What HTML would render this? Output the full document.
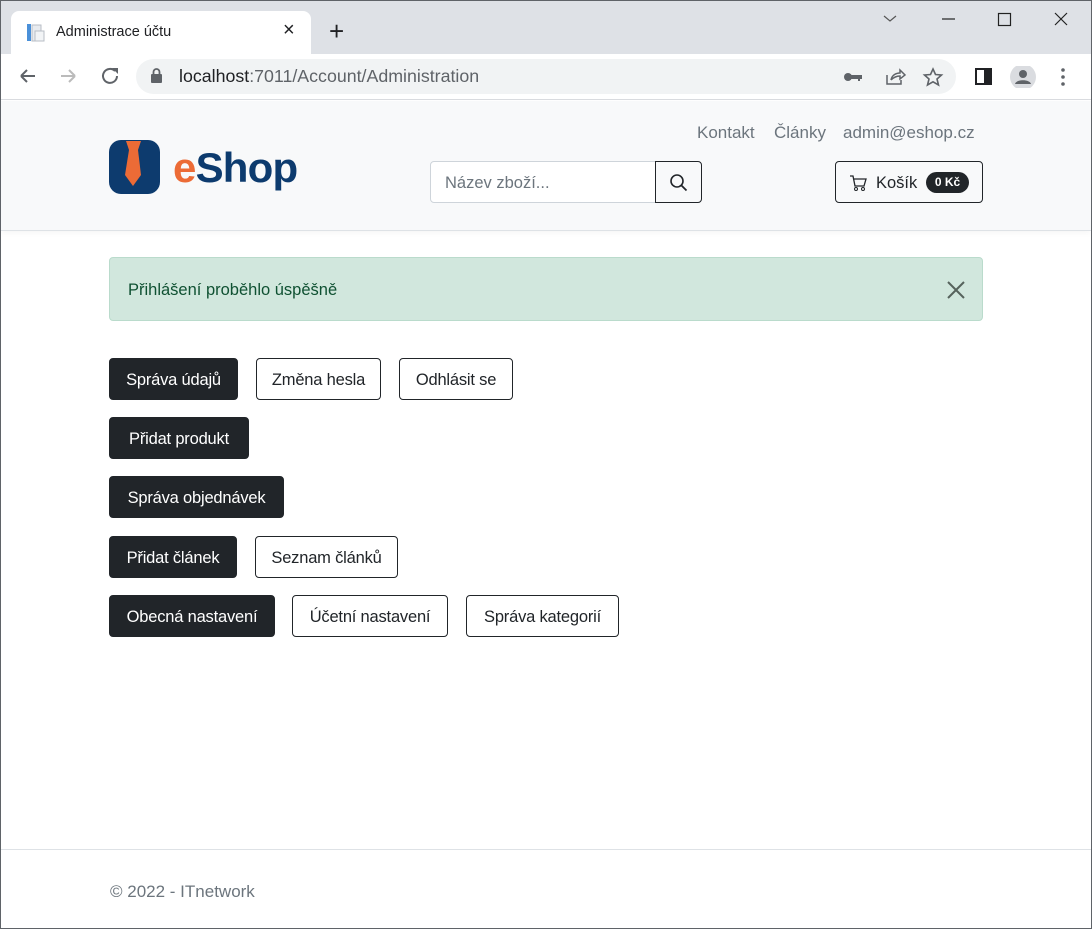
<!DOCTYPE html>
<html><head><meta charset="utf-8"><style>
*{box-sizing:border-box;margin:0;padding:0}
body{width:1092px;height:929px;position:relative;overflow:hidden;font-family:"Liberation Sans",sans-serif;background:#fff}
.a{position:absolute}
.frame{left:0;top:0;width:1092px;height:929px;border:1px solid #5f6368;z-index:9;pointer-events:none}
.btn{position:absolute;height:42px;border:1px solid #212529;border-radius:4px;font-size:16.5px;line-height:43px;text-align:center;white-space:nowrap;color:#212529;background:#fff;letter-spacing:-0.2px}
.dk{background:#212529;color:#fff}
.nav{font-size:17px;color:#6c757d;top:123px}
</style></head><body>
<div class="a frame"></div>
<!-- tab bar -->
<div class="a" style="left:0;top:0;width:1092px;height:54px;background:#dee1e6"></div>
<div class="a" style="left:11px;top:11px;width:300px;height:44px;background:#fff;border-radius:8px 8px 0 0"></div>
<svg class="a" style="left:26px;top:23px" width="20" height="20"><rect x="1" y="1" width="4" height="17" fill="#4a90d9"/><rect x="6" y="2" width="9" height="16" fill="#e8ebef" stroke="#b8bec6"/><rect x="9" y="8" width="9" height="10" fill="#f2f4f6" stroke="#b8bec6"/></svg>
<div class="a" style="left:56px;top:24px;font-size:14.5px;color:#202124">Administrace účtu</div>
<div class="a" style="left:283px;top:19px;font-size:20px;color:#202124">×</div>
<div class="a" style="left:329px;top:16px;font-size:26px;color:#202124;font-weight:300">+</div>
<svg class="a" style="left:880px;top:12px" width="200" height="18"><path d="M4 4l6 5 6-5" stroke="#555" fill="none" stroke-width="1.2"/><path d="M62 7h13" stroke="#222" stroke-width="1.2"/><rect x="118.5" y="1.5" width="12" height="12" fill="none" stroke="#222" stroke-width="1.2"/><path d="M175 1l12 12M187 1l-12 12" stroke="#222" stroke-width="1.2"/></svg>
<!-- toolbar -->
<div class="a" style="left:0;top:54px;width:1092px;height:46px;background:#fff;border-bottom:1px solid #dadce0"></div>
<svg class="a" style="left:18px;top:66px" width="110" height="20"><path d="M3 10h14M3 10l6-6M3 10l6 6" stroke="#5f6368" stroke-width="2" fill="none"/><path d="M43 10h14M57 10l-6-6M57 10l-6 6" stroke="#bbb" stroke-width="2" fill="none"/><path d="M97 5a7 7 0 1 0 2 5" stroke="#5f6368" stroke-width="2" fill="none"/><path d="M94 2h6v6z" fill="#5f6368"/></svg>
<div class="a" style="left:136px;top:59px;width:820px;height:35px;background:#f1f3f4;border-radius:18px"></div>
<svg class="a" style="left:150px;top:68px" width="14" height="16"><rect x="1" y="6" width="11" height="9" rx="1" fill="#5f6368"/><path d="M3.5 6V4a3 3 0 0 1 6 0v2" stroke="#5f6368" stroke-width="1.8" fill="none"/></svg>
<div class="a" style="left:179px;top:66px;font-size:17.8px;color:#202124">localhost<span style="color:#5f6368">:7011/Account/Administration</span></div>
<svg class="a" style="left:843px;top:66px" width="230" height="22"><circle cx="5" cy="11" r="4" fill="#5f6368"/><path d="M8 9h11v4h-2v2h-2v-2h-7z" fill="#5f6368"/><path d="M44 9v9h14v-4M48 14c1-5 5-7 9-7v-3l5 5-5 4v-3c-4 0-7 2-9 4" stroke="#5f6368" stroke-width="1.5" fill="none"/><path d="M90 3l2.5 5.5 6 .5-4.5 4 1.5 6-5.5-3.2-5.5 3.2 1.5-6-4.5-4 6-.5z" stroke="#5f6368" stroke-width="1.6" fill="none"/><rect x="133" y="3" width="15" height="15" fill="none" stroke="#202124" stroke-width="2"/><rect x="141" y="3" width="7" height="15" fill="#202124"/><circle cx="180" cy="11" r="13" fill="#dadce0"/><circle cx="180" cy="8" r="4" fill="#5f6368"/><path d="M172 18c1-5 15-5 16 0z" fill="#5f6368"/><circle cx="220" cy="4" r="1.8" fill="#5f6368"/><circle cx="220" cy="11" r="1.8" fill="#5f6368"/><circle cx="220" cy="18" r="1.8" fill="#5f6368"/></svg>
<!-- header -->
<div class="a" style="left:1px;top:101px;width:1090px;height:130px;background:#f8f9fa;border-bottom:1px solid #dee2e6;box-shadow:0 2px 6px rgba(0,0,0,.04)"></div>
<svg class="a" style="left:109px;top:140px" width="52" height="54"><rect x="0" y="0" width="51" height="54" rx="12" fill="#0d3b6e"/><path d="M17 1h15l-3 9h-9z" fill="#ec6b36"/><path d="M20 10h9l3 25-8 11-8-11z" fill="#ec6b36"/></svg>
<div class="a" style="left:173px;top:144px;font-size:42px;font-weight:bold;letter-spacing:-0.8px;color:#0d3b6e"><span style="color:#ec6b36">e</span>Shop</div>
<div class="a nav" style="left:697px">Kontakt</div>
<div class="a nav" style="left:774px">Články</div>
<div class="a nav" style="left:843px">admin@eshop.cz</div>
<div class="a" style="left:430px;top:161px;width:226px;height:42px;background:#fff;border:1px solid #ced4da;border-radius:4px 0 0 4px;padding-left:14px;line-height:43px;font-size:16.5px;color:#6c757d">Název zboží...</div>
<div class="a" style="left:655px;top:161px;width:47px;height:42px;border:1px solid #212529;border-radius:0 4px 4px 0"></div>
<svg class="a" style="left:669px;top:173px" width="20" height="20"><circle cx="8" cy="8" r="6" stroke="#212529" stroke-width="1.6" fill="none"/><path d="M12.5 12.5l5 5" stroke="#212529" stroke-width="1.8"/></svg>
<div class="a" style="left:835px;top:161px;width:148px;height:42px;border:1px solid #212529;border-radius:4px"></div>
<svg class="a" style="left:849px;top:174px" width="18" height="18"><path d="M1 2h3l2 10h9l2-7H5" stroke="#212529" stroke-width="1.3" fill="none"/><circle cx="7" cy="15" r="1.5" stroke="#212529" fill="none"/><circle cx="14" cy="15" r="1.5" stroke="#212529" fill="none"/></svg>
<div class="a" style="left:876px;top:174px;font-size:16.5px;color:#212529">Košík</div>
<div class="a" style="left:926px;top:172px;width:43px;height:21px;background:#212529;border-radius:11px;color:#fff;font-size:12px;font-weight:bold;line-height:21px;text-align:center">0 Kč</div>
<!-- alert -->
<div class="a" style="left:109px;top:257px;width:874px;height:64px;background:#d1e7dd;border:1px solid #badbcc;border-radius:4px"></div>
<div class="a" style="left:128px;top:281px;font-size:16.5px;color:#0f5132">Přihlášení proběhlo úspěšně</div>
<svg class="a" style="left:946px;top:280px" width="20" height="20"><path d="M2 2l16 16M18 2L2 18" stroke="#56635c" stroke-width="2"/></svg>
<!-- buttons -->
<div class="btn dk" style="left:109px;top:358px;width:129px">Správa údajů</div>
<div class="btn" style="left:256px;top:358px;width:125px">Změna hesla</div>
<div class="btn" style="left:399px;top:358px;width:114px">Odhlásit se</div>
<div class="btn dk" style="left:109px;top:417px;width:140px">Přidat produkt</div>
<div class="btn dk" style="left:109px;top:476px;width:175px">Správa objednávek</div>
<div class="btn dk" style="left:109px;top:536px;width:128px">Přidat článek</div>
<div class="btn" style="left:255px;top:536px;width:143px">Seznam článků</div>
<div class="btn dk" style="left:109px;top:595px;width:166px">Obecná nastavení</div>
<div class="btn" style="left:292px;top:595px;width:156px">Účetní nastavení</div>
<div class="btn" style="left:466px;top:595px;width:153px">Správa kategorií</div>
<!-- footer -->
<div class="a" style="left:1px;top:849px;width:1090px;height:1px;background:#dee2e6"></div>
<div class="a" style="left:110px;top:882px;font-size:17px;color:#6c757d">© 2022 - ITnetwork</div>
</body></html>
